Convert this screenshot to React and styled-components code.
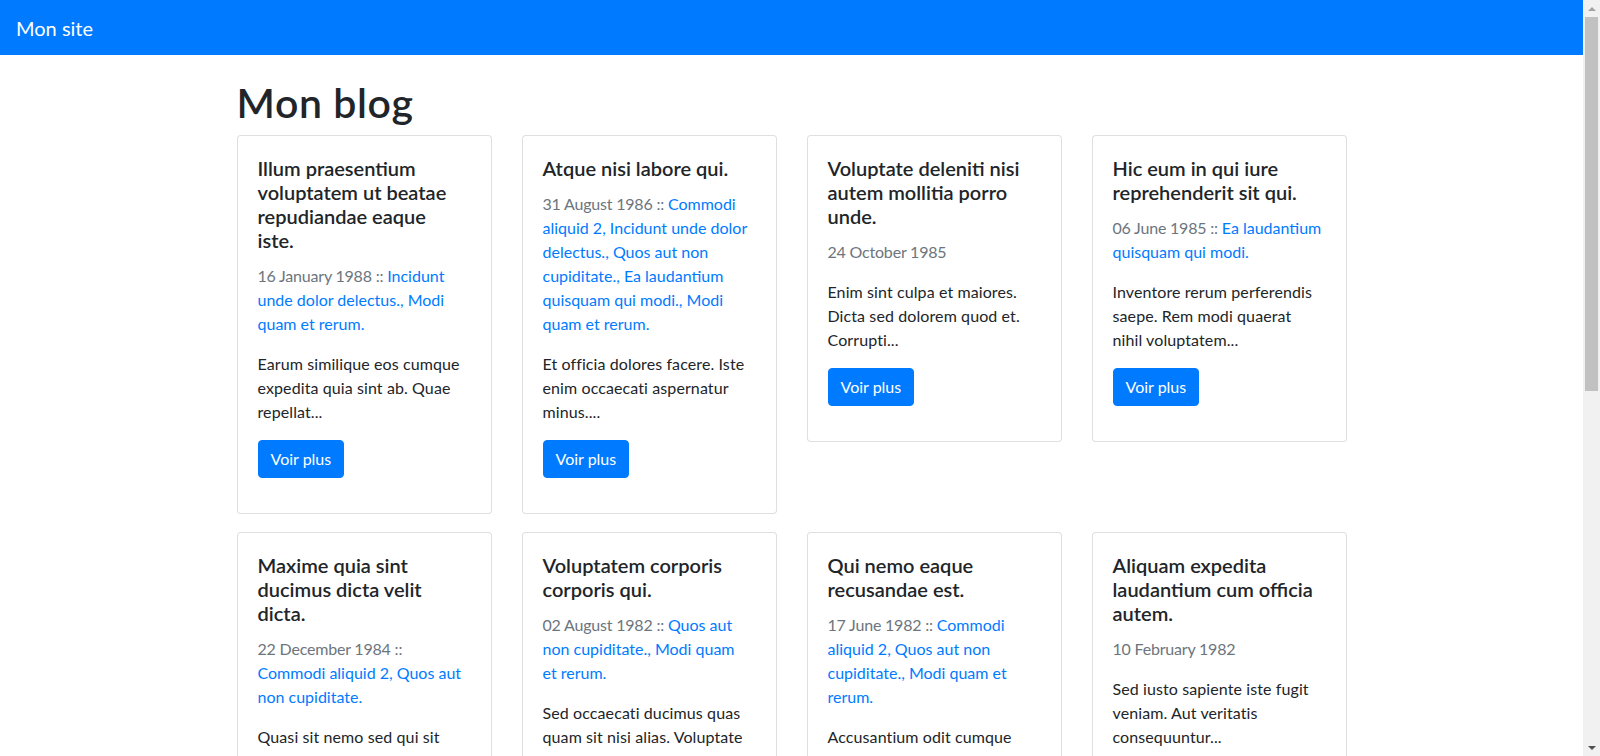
import React from 'react';
import styled, { createGlobalStyle } from 'styled-components';

const GlobalStyle = createGlobalStyle`
    html, body {
        margin: 0;
        padding: 0;
    }
    body {
        font-family: Lato, "Liberation Sans", sans-serif;
        font-size: 16px;
        line-height: 1.5;
        color: #212529;
        background: #fff;
    }
    * {
        box-sizing: border-box;
    }
`

const Page = styled.div`
    display: flex;
    align-items: flex-start;
`

const Viewport = styled.div`
    flex: 1;
    min-width: 0;
`

// fake classic window scrollbar, the reference was taken with one
const Scrollbar = styled.div`
    position: sticky;
    top: 0;
    flex: 0 0 17px;
    display: flex;
    flex-direction: column;
    height: 100vh;
    background: #f1f1f1;
`

const Arrow = styled.div`
    display: flex;
    align-items: center;
    justify-content: center;
    height: 17px;

    &::before {
        content: '';
        border-left: 4px solid transparent;
        border-right: 4px solid transparent;
        ${p => p.$down
            ? 'border-top: 4px solid #505050;'
            : 'border-bottom: 4px solid #a3a3a3;'}
    }
`

const Track = styled.div`
    flex: 1;
    padding: 0 2px;
`

const Thumb = styled.div`
    height: 374px;
    background: #c1c1c1;
`

const Navbar = styled.nav`
    display: flex;
    align-items: center;
    height: 55px;
    padding: 0 16px;
    background: #007bff;
`

const Brand = styled.a`
    color: #fff;
    font-size: 20px;
    line-height: 30px;
    text-decoration: none;
`

const Container = styled.main`
    max-width: 1140px;
    margin: 0 auto;
    padding: 0 15px;
`

const Title = styled.h1`
    margin: 24px 0 8px;
    font-size: 41px;
    font-weight: 600;
    line-height: 48px;
    letter-spacing: .6px;
`

const Row = styled.div`
    display: flex;
    flex-wrap: wrap;
    align-items: flex-start;
    margin: 0 -15px;
`

const Col = styled.div`
    flex: 0 0 25%;
    max-width: 25%;
    padding: 0 15px;
`

const Card = styled.article`
    border: 1px solid rgba(0, 0, 0, .125);
    border-radius: 4px;
    margin-bottom: 18px;
    padding: 20px 24px 35px 20px;
    background: #fff;
`

const CardTitle = styled.h5`
    margin: 0 0 12px;
    font-size: 20px;
    font-weight: 600;
    line-height: 24px;
`

const Meta = styled.p`
    margin: 0 0 16px;
    color: #6c757d;
`

const PostDate = styled.span`
    letter-spacing: -.2px;
`

const Tag = styled.a`
    color: #007bff;
    text-decoration: none;
`

const Excerpt = styled.p`
    margin: 0 0 16px;
    letter-spacing: .1px;
`

const Button = styled.a`
    display: inline-block;
    padding: 6px 12px;
    border: 1px solid #007bff;
    border-radius: 4px;
    background: #007bff;
    color: #fff;
    font-size: 16px;
    line-height: 24px;
    text-decoration: none;
`

const posts = [
    {
        title: 'Illum praesentium voluptatem ut beatae repudiandae eaque iste.',
        date: '16 January 1988',
        tags: ['Incidunt unde dolor delectus.', 'Modi quam et rerum.'],
        excerpt: 'Earum similique eos cumque expedita quia sint ab. Quae repellat...',
    },
    {
        title: 'Atque nisi labore qui.',
        date: '31 August 1986',
        tags: ['Commodi aliquid 2', 'Incidunt unde dolor delectus.', 'Quos aut non cupiditate.', 'Ea laudantium quisquam qui modi.', 'Modi quam et rerum.'],
        excerpt: 'Et officia dolores facere. Iste enim occaecati aspernatur minus....',
    },
    {
        title: 'Voluptate deleniti nisi autem mollitia porro unde.',
        date: '24 October 1985',
        tags: [],
        excerpt: 'Enim sint culpa et maiores. Dicta sed dolorem quod et. Corrupti...',
    },
    {
        title: 'Hic eum in qui iure reprehenderit sit qui.',
        date: '06 June 1985',
        tags: ['Ea laudantium quisquam qui modi.'],
        excerpt: 'Inventore rerum perferendis saepe. Rem modi quaerat nihil voluptatem...',
    },
    {
        title: 'Maxime quia sint ducimus dicta velit dicta.',
        date: '22 December 1984',
        tags: ['Commodi aliquid 2', 'Quos aut non cupiditate.'],
        excerpt: 'Quasi sit nemo sed qui sit omnis. Ea rem dolor dolores...',
    },
    {
        title: 'Voluptatem corporis corporis qui.',
        date: '02 August 1982',
        tags: ['Quos aut non cupiditate.', 'Modi quam et rerum.'],
        excerpt: 'Sed occaecati ducimus quas quam sit nisi alias. Voluptate fugit...',
    },
    {
        title: 'Qui nemo eaque recusandae est.',
        date: '17 June 1982',
        tags: ['Commodi aliquid 2', 'Quos aut non cupiditate.', 'Modi quam et rerum.'],
        excerpt: 'Accusantium odit cumque illum dolor dolorem. Error quia...',
    },
    {
        title: 'Aliquam expedita laudantium cum officia autem.',
        date: '10 February 1982',
        tags: [],
        excerpt: 'Sed iusto sapiente iste fugit veniam. Aut veritatis consequuntur...',
    },
]

const PostCard = ({ post }) => (
    <Card>
        <CardTitle>{post.title}</CardTitle>
        <Meta>
            <PostDate>
                {post.date}
                {post.tags.length > 0 && ' :: '}
            </PostDate>
            {post.tags.map((tag, i) => (
                <React.Fragment key={tag}>
                    {i > 0 && <Tag href="#">, </Tag>}
                    <Tag href="#">{tag}</Tag>
                </React.Fragment>
            ))}
        </Meta>
        <Excerpt>{post.excerpt}</Excerpt>
        <Button href="#">Voir plus</Button>
    </Card>
)

const App = () => (
    <Page>
        <GlobalStyle />
        <Viewport>
            <Navbar>
                <Brand href="#">Mon site</Brand>
            </Navbar>
            <Container>
                <Title>Mon blog</Title>
                <Row>
                    {posts.map(post => (
                        <Col key={post.title}>
                            <PostCard post={post} />
                        </Col>
                    ))}
                </Row>
            </Container>
        </Viewport>
        <Scrollbar>
            <Arrow />
            <Track>
                <Thumb />
            </Track>
            <Arrow $down />
        </Scrollbar>
    </Page>
)

export default App;
